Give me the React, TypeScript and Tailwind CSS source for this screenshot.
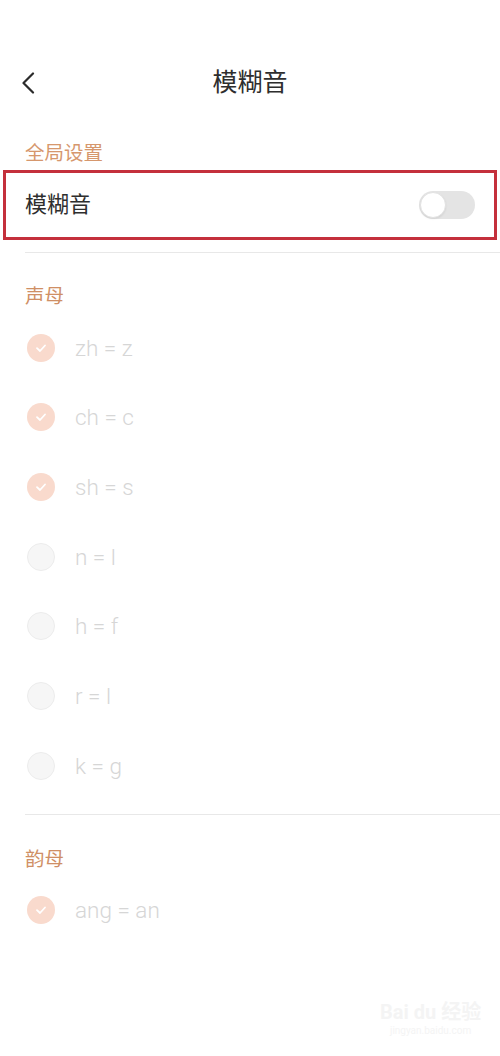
import React from "react";

const font = { fontFamily: "Roboto, 'Noto Sans CJK SC', 'Noto Sans', sans-serif" };

type Item = { label: string; checked: boolean };

const shengmu: Item[] = [
  { label: "zh = z", checked: true },
  { label: "ch = c", checked: true },
  { label: "sh = s", checked: true },
  { label: "n = l", checked: false },
  { label: "h = f", checked: false },
  { label: "r = l", checked: false },
  { label: "k = g", checked: false },
];

const yunmu: Item[] = [{ label: "ang = an", checked: true }];

function Check({ checked }: { checked: boolean }) {
  if (checked) {
    return (
      <div className="w-[28px] h-[28px] rounded-full bg-[#f9dacd] flex items-center justify-center">
        <svg width="14" height="14" viewBox="0 0 14 14" fill="none">
          <path d="M3 7.2 L6 10 L11 4.5" stroke="#ffffff" strokeWidth="1.8" strokeLinecap="round" strokeLinejoin="round" />
        </svg>
      </div>
    );
  }
  return <div className="w-[28px] h-[28px] rounded-full bg-[#f6f6f6] border border-[#ececec]" />;
}

function Row({ item }: { item: Item }) {
  return (
    <div className="h-[69.67px] flex items-center pl-[27px]">
      <Check checked={item.checked} />
      <span className="ml-[20px] text-[22.5px] leading-[26px] font-light text-[#d6d6d6]">{item.label}</span>
    </div>
  );
}

export default function App() {
  return (
    <div className="w-[500px] h-[1056px] bg-white relative overflow-hidden" style={font}>
      <div className="pt-[50px]">
        <div className="h-[66px] grid grid-cols-[80px_1fr_80px] items-center">
          <div className="pl-[21px] flex items-center">
            <svg width="14" height="22" viewBox="0 0 14 22" fill="none">
              <path d="M12 1.5 L2.5 11 L12 20.5" stroke="#2b2b2b" strokeWidth="2.2" strokeLinecap="round" strokeLinejoin="round" />
            </svg>
          </div>
          <div className="text-center text-[25px] leading-[30px] text-[#2e2e2e]">模糊音</div>
          <div />
        </div>

        <div className="pt-[26px] pl-[25px] text-[19.5px] leading-[24px] text-[#d6976d]">全局设置</div>

        <div className="mt-[4px] mx-[3px] h-[70px] border-[3px] border-[#c4303c] flex items-center justify-between pl-[19px] pr-[19px]">
          <span className="text-[22px] leading-[26px] text-[#2e2e2e]">模糊音</span>
          <div className="w-[56px] h-[28px] rounded-full bg-[#e4e4e4] flex items-center pl-[1px]">
            <div className="w-[26px] h-[26px] rounded-full bg-white border border-[#e2e2e2] shadow-[0_1px_2px_rgba(0,0,0,0.08)]" />
          </div>
        </div>

        <div className="mt-[12px] ml-[25px] h-px bg-[#e8e8e8]" />

        <div className="pt-[32px] pl-[25px] text-[19.5px] leading-[24px] text-[#cf8f65]">声母</div>
        <div className="mt-[4px]">
          {shengmu.map((it) => (
            <Row key={it.label} item={it} />
          ))}
        </div>

        <div className="mt-[13px] ml-[25px] h-px bg-[#e8e8e8]" />

        <div className="pt-[33px] pl-[25px] text-[19.5px] leading-[24px] text-[#cf8f65]">韵母</div>
        <div className="mt-[4px]">
          {yunmu.map((it) => (
            <Row key={it.label} item={it} />
          ))}
        </div>
      </div>

      <div className="absolute left-[380px] top-[1000px] flex flex-col items-center text-[#f4f4f4]">
        <div className="text-[20px] leading-[24px] font-bold">Bai du 经验</div>
        <div className="text-[10px] leading-[14px]">jingyan.baidu.com</div>
      </div>
    </div>
  );
}
